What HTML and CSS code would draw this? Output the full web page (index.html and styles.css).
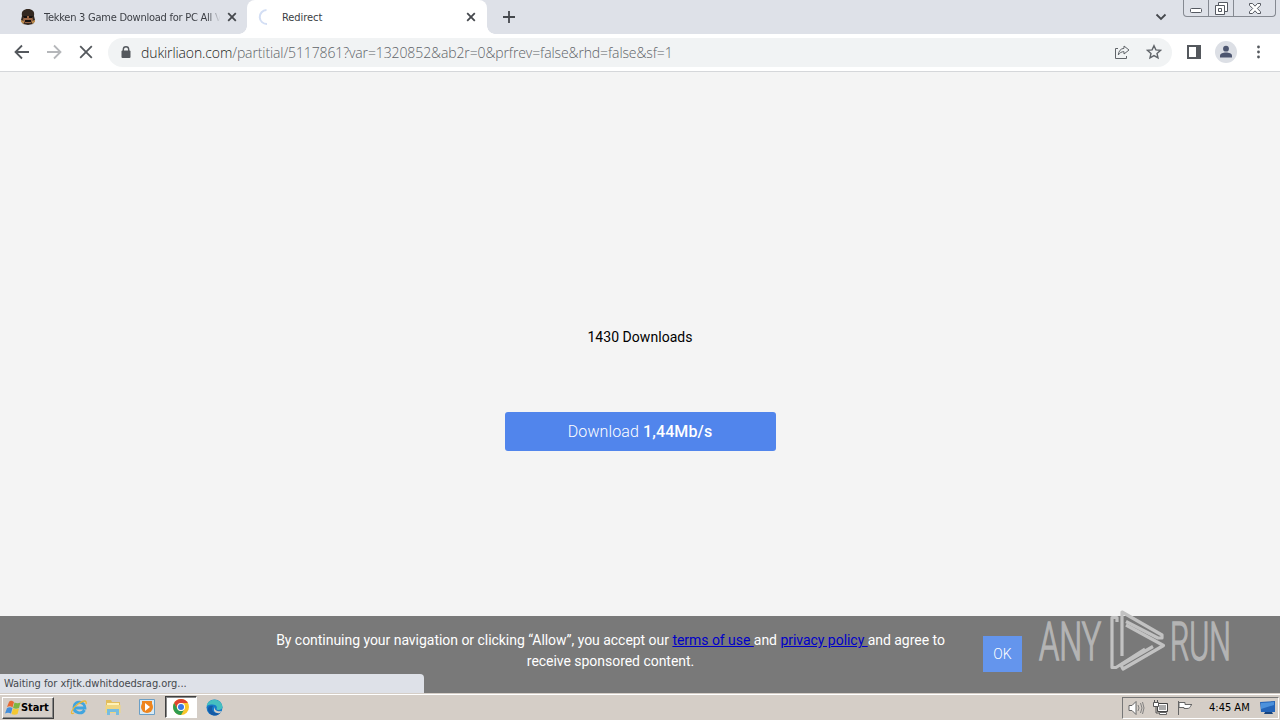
FILE: index.html
```html
<!DOCTYPE html>
<html lang="en">
<head>
    <meta charset="UTF-8">
    <meta name="viewport" content="width=device-width, initial-scale=1.0">
    <title>Redirect</title>
    <link rel="stylesheet" href="styles.css">
</head>
<body>
<header class="tabs">
    <div class="tab tab-first">
        <svg class="favicon" width="16" height="18" viewBox="0 0 16 18">
            <path d="M2 8C1 3 4 1 8 1s7 2 6 7l1 4-2 4-5 1-5-1-2-4z" fill="#332820"/>
            <path d="M4 8h8l1 4-2 3H5l-2-3z" fill="#9a6544"/>
            <path d="M3 8h4v2H4zM9 8h4l-1 2H9zM5 12h6v2H5z" fill="#15110f"/>
            <path d="M1 12l3 1v3l-3-2zM12 13l3-1v2l-3 2z" fill="#b98a4d"/>
        </svg>
        <span class="tab-title fade">Tekken 3 Game Download for PC All V</span>
        <svg class="close" width="10" height="10" viewBox="0 0 10 10"><path d="M1.2 1.2l7.6 7.6M8.8 1.2L1.2 8.8"/></svg>
    </div>
    <div class="tab tab-active">
        <svg class="favicon" width="16" height="18" viewBox="0 0 16 18"><path d="M8.500 2A7 7 0 0 0 9 16" fill="none" stroke="#d3def4" stroke-width="2"/></svg>
        <span class="tab-title">Redirect</span>
        <svg class="close" width="10" height="10" viewBox="0 0 10 10"><path d="M1.2 1.2l7.6 7.6M8.8 1.2L1.2 8.8"/></svg>
    </div>
    <svg class="new-tab" width="12" height="12" viewBox="0 0 12 12"><path d="M6 0v12M0 6h12"/></svg>
    <svg class="chevron" width="12" height="8" viewBox="0 0 12 8"><path d="M1.500 1.500L6 6l4.500-4.500"/></svg>
    <div class="window-buttons">
        <span><svg width="13" height="6" viewBox="0 0 13 6"><rect x=".5" y=".5" width="11" height="4" rx="1" fill="#fff" stroke="#555961"/></svg></span>
        <span><svg width="13" height="13" viewBox="0 0 13 13"><path d="M3.500 3.500v-3h9v9h-3M.5 3.500h9v9h-9zM3.500 6.500h3v3h-3z" fill="#fff" stroke="#555961"/></svg></span>
        <span><svg width="12" height="11" viewBox="0 0 12 11"><path d="M.5.500h3L6 3.200 8.500.5h3v1.800L8.300 5.500l3.200 3.200v1.800h-3L6 7.800 3.500 10.500h-3V8.700l3.200-3.200L.5 2.300z" fill="#fff" stroke="#555961"/></svg></span>
    </div>
</header>
<nav class="toolbar">
    <svg class="nav-icon" width="16" height="16" viewBox="0 0 16 16"><path d="M15 8H2M8 1.500L1.500 8 8 14.500"/></svg>
    <svg class="nav-icon disabled" width="16" height="16" viewBox="0 0 16 16"><path d="M1 8h13M8 1.500L14.500 8 8 14.500"/></svg>
    <svg class="nav-icon" width="16" height="16" viewBox="0 0 16 16"><path d="M2.200 2.200l11.600 11.600M13.800 2.200L2.200 13.800"/></svg>
    <div class="address">
        <svg class="lock" width="10" height="13" viewBox="0 0 10 13"><path d="M2.300 6V3.500a2.700 2.700 0 0 1 5.400 0V6" fill="none" stroke="#54585d" stroke-width="1.400"/><rect x=".5" y="4.500" width="9" height="7.500" rx="1" fill="#54585d"/></svg>
        <span class="url">dukirliaon.com<span class="path">/partitial/5117861?var=1320852&amp;ab2r=0&amp;prfrev=false&amp;rhd=false&amp;sf=1</span></span>
        <svg class="share" width="16" height="16" viewBox="0 0 16 16"><path d="M4 4.500H1.500v10h11V12M10 2l5 4-5 4V7.700C7.500 7.600 5.600 8.800 4.300 11 4.500 7.300 6.500 4.600 10 4.300z"/></svg>
        <svg class="star" width="16" height="16" viewBox="0 0 16 16"><path d="M8 1.700l1.900 4.200 4.500.5-3.400 3 1 4.500L8 11.600l-4 2.300 1-4.500-3.400-3 4.500-.5z"/></svg>
    </div>
    <svg class="panel" width="14" height="14" viewBox="0 0 14 14"><path d="M0 0h14v14H0zM2 2v10h7V2z" fill="#54585d" fill-rule="evenodd"/></svg>
    <svg class="profile" width="22" height="22" viewBox="0 0 22 22"><circle cx="11" cy="11" r="11" fill="#dcdfe5"/><circle cx="11" cy="7.700" r="2.900" fill="#4d5670"/><path d="M5 16.500v-1.700c0-4.300 12-4.300 12 0v1.700z" fill="#4d5670"/></svg>
    <svg class="menu" width="4" height="14" viewBox="0 0 4 14"><g fill="#54585d"><circle cx="1.500" cy="2" r="1.400"/><circle cx="1.500" cy="7" r="1.400"/><circle cx="1.500" cy="12" r="1.400"/></g></svg>
</nav>
<main>
    <p class="count">1430 Downloads</p>
    <button class="download">Download <b>1,44Mb/s</b></button>
    <section class="consent">
        <p>By continuing your navigation or clicking “Allow”, you accept our <a href="#">terms of use </a>and <a href="#">privacy policy </a>and agree to<br>receive sponsored content.</p>
        <button class="ok">OK</button>
    </section>
    <div class="status">Waiting for xfjtk.dwhitdoedsrag.org...</div>
    <svg class="watermark" width="200" height="68" viewBox="0 0 200 68">
        <g class="mark-text">
            <text x="3" y="52" textLength="62" lengthAdjust="spacingAndGlyphs">ANY</text>
            <text x="134" y="52" textLength="61" lengthAdjust="spacingAndGlyphs">RUN</text>
        </g>
        <g class="mark-shape">
            <path d="M81 14V9.500h-5v50h4l29-18.500"/>
            <path d="M86 48V4l40 23v3h-4L90 13.500"/>
            <path d="M90 17l37.500 20.500L87 61l-2-4 32-18.500"/>
        </g>
    </svg>
</main>
<footer class="taskbar">
    <div class="start">
        <svg width="16" height="16" viewBox="0 0 16 16"><path d="M4 2c2-2 3-1 5 0L7.500 7.500C6 6 4 6 2 7z" fill="#e66a32"/><path d="M9.500 2.500c2 1 4 1 6 0L14 8c-2 1-4 1-6 0z" fill="#7eb642"/><path d="M2 8c2-1 4-1 5.500 0L6 13.500c-2-1-4-1-6 0z" fill="#438edb"/><path d="M8 8.500c2 1 4 1 6 0L12.500 14c-2 1-4 1-6 0z" fill="#f4c832"/></svg>
        <b>Start</b>
    </div>
    <div class="launch">
        <svg width="18" height="18" viewBox="0 0 18 18"><path d="M14.500 12c-2.500 5-11 3-10.500-3 .5-7 11-6 11 1H5" fill="none" stroke="#41a5df" stroke-width="2.800"/><path d="M4 15c-5 3-2-5 4-9s9-4 8 0" fill="none" stroke="#edb936" stroke-width="1.300"/></svg>
    </div>
    <div class="launch">
        <svg width="18" height="18" viewBox="0 0 18 18"><path d="M2 2h5l1 2h8v11H2z" fill="#e2bd5c"/><path d="M3 5h12v5H3z" fill="#fff2b6"/><path d="M1.500 7h15v8h-15z" fill="#efd681"/><path d="M3 17v-6h12v6h-3v-3H6v3z" fill="#77bde0"/></svg>
    </div>
    <div class="launch">
        <svg width="18" height="18" viewBox="0 0 18 18"><path d="M1.500 1.500h15v15h-15z" fill="#d8eaf5" stroke="#6b9fc6"/><circle cx="9" cy="9" r="6" fill="#ee851e"/><path d="M4 3h10v4H4z" fill="#ee851e"/><path d="M7 5l5 4-5 4z" fill="#fff"/></svg>
    </div>
    <div class="launch pressed">
        <svg width="16" height="16" viewBox="0 0 16 16"><circle cx="8" cy="8" r="8" fill="#f9c62b"/><path d="M1.100 4A8 8 0 0 1 14.900 4H8a4 4 0 0 0-3.500 6z" fill="#df4432"/><path d="M1.100 4A8 8 0 0 0 8 16l3.500-6a4 4 0 0 1-7 0z" fill="#2f9c50"/><circle cx="8" cy="8" r="4" fill="#fff"/><circle cx="8" cy="8" r="3" fill="#3979e6"/></svg>
    </div>
    <div class="launch">
        <svg width="17" height="17" viewBox="0 0 17 17"><circle cx="8.500" cy="8.500" r="8" fill="#1679c9"/><path d="M.7 7C2-2 16-1 16.500 8c0 3-5 4-6 2 2-4-4-6-9.800-3z" fill="#45bfc0"/><path d="M7 7c-3 4 1 8 7 7-4 5-12 2-12-4 0-3 3-4 5-3z" fill="#155ba6"/><path d="M9 8c-1 3 2 5 7 4l-2 2c-4 1-8-2-5-6z" fill="#d5cec7"/></svg>
    </div>
    <div class="tray">
        <svg width="17" height="16" viewBox="0 0 17 16"><path d="M1 5.500h3l4-4v13l-4-4H1z" fill="#fff" stroke="#666"/><path d="M10 5q2 3 0 6M12.500 3q3 5 0 10M14.500 2q3 6 0 12" fill="none" stroke="#777" stroke-width=".9"/></svg>
        <svg width="16" height="16" viewBox="0 0 16 16"><path d="M4.500 3.500h10v8h-10z" fill="#aaa" stroke="#444"/><path d="M5.500 4.500h8v6h-8z" fill="none" stroke="#fff"/><path d="M6.500 12.500h7v2h-7z" fill="#fff" stroke="#666"/><path d="M1.500 0v2M4.500 0v2M3 6v7h3" fill="none" stroke="#555"/><path d="M.5 2.500h5v4h-5z" fill="#fff" stroke="#555"/></svg>
        <svg width="17" height="16" viewBox="0 0 17 16"><path d="M1.500 1v14M2 2.500h6v2h7c-2 1-1 4-5 4H7v-1H2z" fill="#fff" stroke="#666"/></svg>
        <time>4:45 AM</time>
        <svg class="desktop" width="16" height="14" viewBox="0 0 16 14"><path d="M0 1l15-1v11H1z" fill="#2464b8"/><path d="M1 2l13-1v3L1 8z" fill="#4c91dc"/><path d="M5 11h7l1 2H4z" fill="#17447e"/></svg>
    </div>
</footer>
</body>
</html>
```

FILE: styles.css
```css
* {
    box-sizing: border-box;
}
body {
    width: 1280px;
    height: 720px;
    margin: 0;
    overflow: hidden;
    display: flex;
    flex-direction: column;
    font-family: Roboto, sans-serif;
}
svg {
    display: block;
    flex-shrink: 0;
}
.tabs {
    height: 34px;
    background: #dee1e8;
    display: flex;
    align-items: center;
}
.tab {
    height: 34px;
    display: flex;
    align-items: center;
    font: 11px "DejaVu Sans Condensed", "DejaVu Sans", sans-serif;
    font-stretch: condensed;
    color: #3b3e44;
}
.tab-first {
    width: 247px;
    padding: 0 10px 0 20px;
}
.tab-active {
    position: relative;
    width: 240px;
    padding: 0 11px;
    background: #fff;
    border-radius: 8px 8px 0 0;
}
/* curved feet of the active tab */
.tab-active::before, .tab-active::after {
    content: "";
    position: absolute;
    bottom: 0;
    left: -8px;
    width: 8px;
    height: 8px;
    background: radial-gradient(circle at 0 0, transparent 7.5px, #fff 8px);
}
.tab-active::after {
    left: 240px;
    background: radial-gradient(circle at 100% 0, transparent 7.5px, #fff 8px);
}
.tab-title {
    flex: 1;
    margin-left: 7px;
    white-space: nowrap;
}
.tab-active .tab-title {
    margin-left: 8px;
    letter-spacing: -.05px;
}
.fade {
    letter-spacing: -.25px;
    margin-left: 8px;
    margin-right: 5px;
    -webkit-mask-image: linear-gradient(to right, #000 92%, transparent 99%);
}
.close, .new-tab, .chevron {
    fill: none;
    stroke: #45484d;
    stroke-width: 1.8;
}
.new-tab {
    margin-left: 16px;
}
.chevron {
    margin-left: auto;
    margin-right: 16px;
}
.window-buttons {
    width: 93px;
    height: 17px;
    margin-right: 4px;
    align-self: flex-start;
    display: grid;
    grid-template-columns: 24px 25px 1fr;
    border: 1px solid #858991;
    border-top: 0;
    border-radius: 0 0 4px 4px;
}
.window-buttons span {
    display: flex;
    justify-content: center;
    align-items: center;
}
.window-buttons span:first-child {
    padding-top: 5px;
}
.window-buttons span + span {
    border-left: 1px solid #858991;
}
.toolbar {
    height: 38px;
    padding: 0 19px 0 14px;
    display: flex;
    align-items: center;
    border-bottom: 1px solid #d5d7da;
    background: #fff;
}
.nav-icon {
    margin-right: 16px;
    fill: none;
    stroke: #54585d;
    stroke-width: 1.8;
}
.nav-icon, .lock, .share, .star, .panel, .profile, .menu {
    margin-bottom: 1px;
}
.disabled {
    stroke: #b5b7ba;
}
.address {
    width: 1064px;
    height: 29px;
    margin-right: 15px;
    margin-left: -2px;
    padding: 0 10px 0 13px;
    display: flex;
    align-items: center;
    border-radius: 15px;
    background: #f1f3f4;
}
.url {
    flex: 1;
    margin-left: 10px;
    color: #1b1e20;
    font: 300 14px "Open Sans", sans-serif;
    letter-spacing: -.11px;
    white-space: nowrap;
}
.path {
    color: #5f6368;
}
.share, .star {
    fill: none;
    stroke: #606469;
}
.star {
    margin-left: 16px;
    stroke-width: 1.4;
}
.profile {
    margin-left: 14px;
    margin-right: 20px;
}
main {
    position: relative;
    flex: 1;
    display: flex;
    flex-direction: column;
    align-items: center;
    background: #f4f4f4;
}
.count {
    margin: 256px 0 66px;
    font-size: 14px;
    line-height: 18px;
    letter-spacing: .05px;
}
button {
    border: 0;
    color: #fff;
    font-family: Roboto, sans-serif;
}
.download {
    width: 271px;
    height: 39px;
    border-radius: 3px;
    background: #5185ec;
    font-size: 16px;
    font-weight: 300;
    letter-spacing: .12px;
}
.download b {
    font-weight: 500;
}
.consent {
    width: 100%;
    height: 77px;
    margin-top: auto;
    display: flex;
    background: #797979;
    color: #fff;
}
.consent p {
    width: 701px;
    margin: 14px 0 0 260px;
    font-size: 14px;
    line-height: 21px;
    letter-spacing: -.035px;
    text-align: center;
    white-space: nowrap;
}
.consent a {
    color: #0000c8;
}
.ok {
    width: 39px;
    height: 36px;
    margin: 20px 0 0 22px;
    padding: 0;
    background: #6495ed;
    font-size: 14px;
    font-weight: 300;
}
/* loading bubble over the bottom of the page */
.status {
    position: absolute;
    left: 0;
    bottom: 0;
    width: 424px;
    height: 19px;
    padding-left: 4px;
    border-radius: 0 4px 0 0;
    background: #dee1e8;
    color: #45484d;
    font: 11px/19px "DejaVu Sans Condensed", "DejaVu Sans", sans-serif;
    font-stretch: condensed;
    letter-spacing: -.04px;
}
.watermark {
    position: absolute;
    left: 1036px;
    top: 536px;
    overflow: visible;
}
.mark-text {
    fill: #b4b4b4;
    stroke: #b4b4b4;
    stroke-width: 1.6;
    font-size: 53px;
    font-weight: 300;
}
.mark-shape {
    fill: none;
    stroke: #c2c2c2;
    stroke-width: 3.2;
    stroke-linejoin: round;
}
.taskbar {
    height: 27px;
    display: flex;
    align-items: center;
    background: #d5cec7;
    border-top: 1px solid #d5cec7;
    box-shadow: inset 0 1px #fff;
    color: #000;
    font: 11px "DejaVu Sans Condensed", "DejaVu Sans", sans-serif;
    font-stretch: condensed;
}
.start {
    width: 52px;
    height: 22px;
    margin: 1px 8px 0 2px;
    padding-left: 2px;
    display: flex;
    align-items: center;
    border: 1px solid;
    border-color: #fff #404040 #404040 #fff;
    box-shadow: inset -1px -1px #888;
}
.start b {
    letter-spacing: -.1px;
}
.launch {
    width: 34px;
    height: 22px;
    display: flex;
    align-items: center;
    justify-content: center;
}
.pressed {
    width: 32px;
    margin: 0 1px;
    border: 1px solid;
    border-color: #404040 #fff #fff #404040;
    box-shadow: inset 1px 1px #888;
    background: #fff;
}
.launch:nth-child(6) {
    width: 33px;
}
.tray {
    width: 157px;
    height: 22px;
    margin: 1px 1px 0 auto;
    padding-left: 5px;
    display: flex;
    align-items: center;
    gap: 8px;
    border: 1px solid;
    border-color: #777 #fff #fff #777;
}
.tray time {
    margin-left: 7px;
    white-space: nowrap;
}
.tray .desktop {
    margin-left: 2px;
}
```
